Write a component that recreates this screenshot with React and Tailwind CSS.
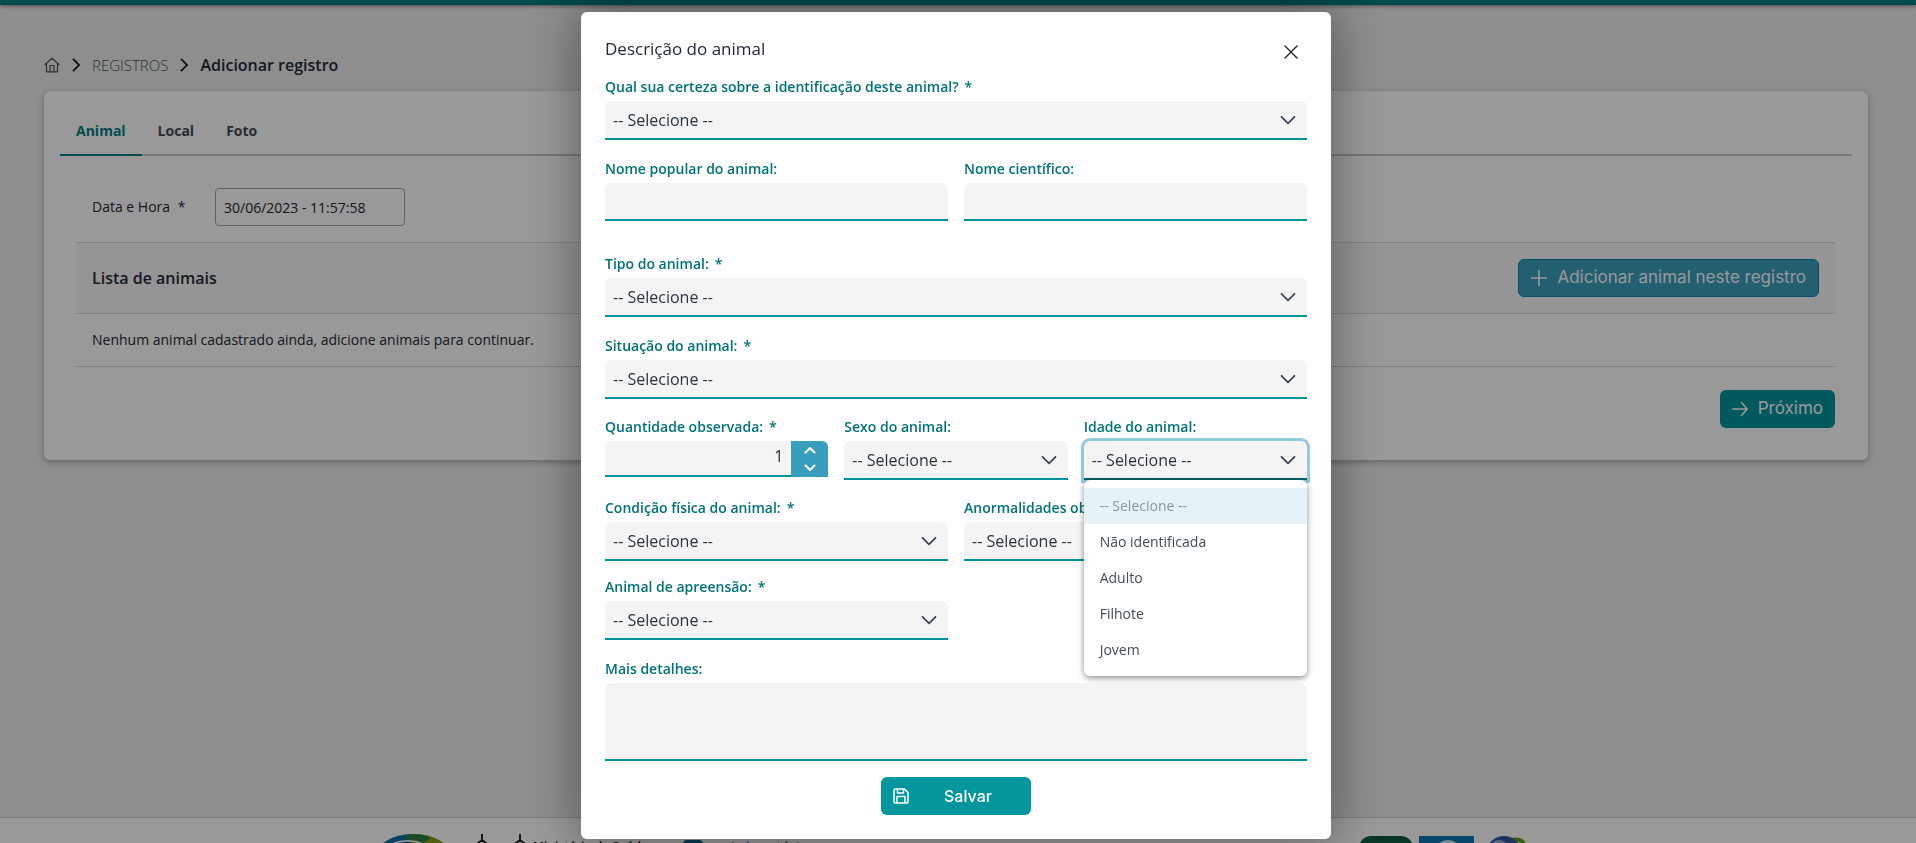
import React from "react";

const control =
  "w-full appearance-none rounded-t-md border-b-2 bg-[#f4f4f4] text-[#2a3540] outline-none";

function Chevron({ className = "" }) {
  return (
    <svg viewBox="0 0 16 16" className={className} fill="none" stroke="currentColor" strokeWidth="1.8" strokeLinecap="round" strokeLinejoin="round" aria-hidden="true">
      <path d="M1.500 4.800 8 11.300l6.500-6.500" />
    </svg>
  );
}

function Label({ htmlFor, required, children }) {
  return (
    <label htmlFor={htmlFor} className="block truncate text-sm font-semibold leading-6 text-[#00727a]">
      {children}
      {required && <span className="ml-1.5">*</span>}
    </label>
  );
}

function Select({ id, label, required, open, className = "" }) {
  return (
    <div className={`flex min-w-0 flex-col gap-0.5 ${className}`}>
      <Label htmlFor={id} required={required}>{label}</Label>
      <div className="relative">
        <select
          id={id}
          className={`${control} block h-[39px] px-2 text-base ${open ? "border-[#00646a] shadow-[0_0_0_3px_#94cadd]" : "border-[#00939b]"}`}
        >
          <option>-- Selecione --</option>
          {open && options.map((o) => <option key={o}>{o}</option>)}
        </select>
        <Chevron className="pointer-events-none absolute right-[11px] top-[11px] size-4 text-[#3b4754]" />
        {open && (
          <ul className="absolute left-0 top-full z-10 w-full rounded-md bg-white py-2 text-sm text-[#414c57] shadow-[0_2px_6px_rgba(0,0,0,0.45)]">
            <li className="bg-[#e6f2f8] px-4 leading-9 text-[#8b959b]">-- Selecione --</li>
            {options.map((o) => (
              <li key={o} className="px-4 leading-9">{o}</li>
            ))}
          </ul>
        )}
      </div>
    </div>
  );
}

const options = ["Não identificada", "Adulto", "Filhote", "Jovem"];

function TextField({ id, label }) {
  return (
    <div className="flex flex-col gap-0.5">
      <Label htmlFor={id}>{label}</Label>
      <input id={id} type="text" className={`${control} h-[38px] border-[#00939b] px-2`} />
    </div>
  );
}

function Breadcrumb() {
  return (
    <nav className="flex items-center gap-3 px-11 leading-6">
      <a href="#inicio" aria-label="Início" className="text-[#495057]">
        <svg viewBox="0 0 16 16" className="size-4" fill="none" stroke="currentColor" strokeWidth="1.2" aria-hidden="true">
          <path d="M.5 8 8 1.2 15.500 8M2.500 6.500v8.300h11V6.500M6 14.500V8.500h4v6" />
        </svg>
      </a>
      <Separator />
      <a href="#registros" className="text-[15px] font-light leading-6 text-[#495057]">REGISTROS</a>
      <Separator />
      <span className="text-base font-semibold leading-6 text-[#212b36]">Adicionar registro</span>
    </nav>
  );
}

function Separator() {
  return (
    <svg viewBox="0 0 8 14" className="h-3.5 w-2" fill="none" stroke="#111" strokeWidth="1.7" aria-hidden="true">
      <path d="M1 .8 7 7l-6 6.200" />
    </svg>
  );
}

function RecordCard() {
  return (
    <section className="mx-11 mr-12 mt-[14px] rounded-md bg-white px-4 pb-8 pt-5 shadow-[0_2px_6px_rgba(0,0,0,0.3)]">
      <div role="tablist" className="flex border-b-2 border-[#c3cacf] text-sm font-bold text-[#3f4b57]">
        <button role="tab" aria-selected="true" className="-mb-0.5 h-[45px] border-b-2 border-[#007f86] px-4 pb-1 text-[#007f86]">Animal</button>
        <button role="tab" className="h-[43px] px-4 pb-1">Local</button>
        <button role="tab" className="h-[43px] px-4 pb-1">Foto</button>
      </div>
      <div className="px-4 pr-[17px]">
        <div className="flex items-center px-4 pb-4 pt-8 text-sm text-[#1e2832]">
          <label htmlFor="data" className="w-[123px]">Data e Hora <span className="ml-1">*</span></label>
          <input id="data" type="text" defaultValue="30/06/2023 - 11:57:58" className="h-[38px] w-[190px] rounded border border-[#9aa4ac] bg-white px-2" />
        </div>
        <table className="w-full text-left">
          <thead>
            <tr className="border-y border-[#d6dadd] bg-[#f8f8f8]">
              <th className="px-4 py-4 text-base font-semibold text-[#212b36]">
                <div className="flex items-center justify-between">
                  Lista de animais
                  <button className="flex h-[38px] items-center gap-2.5 rounded-md border border-[#0087a8] bg-[#399ebd] px-3 font-[Inter] text-[17px] font-normal text-white">
                    <svg viewBox="0 0 16 16" className="size-4" fill="none" stroke="currentColor" strokeWidth="1.6" aria-hidden="true">
                      <path d="M8 0v16M0 8h16" />
                    </svg>
                    Adicionar animal neste registro
                  </button>
                </div>
              </th>
            </tr>
          </thead>
          <tbody>
            <tr className="border-b border-[#d6dadd]">
              <td className="h-[53px] px-4 text-sm text-[#1e2832]">Nenhum animal cadastrado ainda, adicione animais para continuar.</td>
            </tr>
          </tbody>
        </table>
        <div className="mt-[23px] flex justify-end">
          <button className="flex h-[38px] items-center gap-2.5 rounded-md bg-[#00969c] px-3 font-[Inter] text-[17px] text-white">
            <svg viewBox="0 0 16 16" className="size-4" fill="none" stroke="currentColor" strokeWidth="1.6" strokeLinecap="round" strokeLinejoin="round" aria-hidden="true">
              <path d="M.8 8h14.400M9.500 1.500 15.200 8l-5.700 6.500" />
            </svg>
            Próximo
          </button>
        </div>
      </div>
    </section>
  );
}

function Spire() {
  return (
    <svg viewBox="0 0 10 24" className="h-6 w-2.5" fill="none" stroke="#111" strokeWidth="1.800" aria-hidden="true">
      <path d="M5 0v6M1 13V9l4-3 4 3v4M1 13v11M9 13v11" />
    </svg>
  );
}

function Footer() {
  return (
    <footer className="h-[26px] overflow-hidden border-t border-[#ccc] bg-white">
      <div className="flex items-start pl-[375px] pt-4">
        <svg viewBox="0 0 76 40" className="h-10 w-[76px]" aria-hidden="true">
          <ellipse cx="38" cy="24" rx="38" ry="24" fill="#0a6ea3" />
          <path d="M38 0c20 0 34 8 38 20H50L34 8Z" fill="#8a9c1e" />
          <path d="M30 1c10-2 20 0 26 3l-8 5-16-2Z" fill="#2a7d46" />
          <path d="M10 14C24 4 42 5 54 13" fill="none" stroke="#fff" strokeWidth="1.500" />
        </svg>
        <div className="ml-[26px] flex gap-7">
          <Spire />
          <Spire />
        </div>
        <p className="ml-2 w-[150px] pt-[5px] text-xs font-semibold leading-4 text-[#111]">Ministério da Saúde</p>
        <div className="mt-1.5 h-6 w-5 rounded border-4 border-[#0b5f86]" />
        <p className="ml-7 pt-[3px] text-sm leading-5 text-[#0b5f86]">Laboratório</p>
        <div className="ml-auto mr-[386px] mt-0.5 flex items-start">
          <div className="h-10 w-[54px] rounded-xl bg-[#0d5a42]" />
          <svg viewBox="0 0 55 40" className="ml-1.5 h-10 w-[55px]" aria-hidden="true">
            <path d="M0 0h55v40H0Z" fill="#0f76b5" />
            <circle cx="29" cy="18" r="14" fill="#cfe5ef" />
            <circle cx="29" cy="20" r="12" fill="#0f76b5" />
          </svg>
          <svg viewBox="0 0 44 40" className="ml-3 h-10 w-11" aria-hidden="true">
            <path d="M22 5c10-4 18 0 17 9" fill="none" stroke="#5f9d16" strokeWidth="4" />
            <circle cx="18" cy="18" r="18" fill="#3156a0" />
            <ellipse cx="13" cy="8" rx="7" ry="4" fill="#8ba9d4" />
          </svg>
        </div>
      </div>
    </footer>
  );
}

function AnimalDialog() {
  return (
    <div className="fixed inset-0 z-20 flex items-start justify-center bg-black/40 pb-1 pr-1 pt-3">
      <div role="dialog" aria-modal="true" aria-labelledby="titulo" className="w-[750px] max-w-full rounded-md bg-white px-6 pb-6 pt-[25px] shadow-[0_0_50px_6px_rgba(0,0,0,0.35)]">
        <header className="flex h-[38px] items-start justify-between">
          <h2 id="titulo" className="text-[17px] font-medium leading-6 text-[#212b36]">Descrição do animal</h2>
          <button aria-label="Fechar" className="mr-2 flex h-[30px] items-center text-[#222]">
            <svg viewBox="0 0 16 16" className="size-4" fill="none" stroke="currentColor" strokeWidth="1.400" strokeLinecap="round" aria-hidden="true">
              <path d="m2 2 12 12M14 2 2 14" />
            </svg>
          </button>
        </header>
        <form className="flex flex-col">
          <Select id="certeza" label="Qual sua certeza sobre a identificação deste animal?" required />
          <div className="mt-[17px] grid grid-cols-2 gap-4">
            <TextField id="popular" label="Nome popular do animal:" />
            <TextField id="cientifico" label="Nome científico:" />
          </div>
          <Select id="tipo" label="Tipo do animal:" required className="mt-[31px]" />
          <Select id="situacao" label="Situação do animal:" required className="mt-[17px]" />
          <div className="mt-4 grid grid-cols-3 gap-4">
            <div className="flex min-w-0 flex-col gap-0.5">
              <Label htmlFor="quantidade" required>Quantidade observada:</Label>
              <div className="flex h-9">
                <input id="quantidade" type="text" inputMode="numeric" defaultValue="1" className="h-9 min-w-0 flex-1 rounded-tl-md border-b-2 border-[#00939b] bg-[#f4f4f4] px-2 pb-1 text-right text-base text-[#2a3540] outline-none" />
                <div className="flex w-[37px] flex-col rounded-tr-md bg-[#399ebd] text-white">
                  <button type="button" aria-label="Aumentar" className="flex flex-1 items-center justify-center">
                    <svg viewBox="0 0 12 8" className="h-2 w-3" fill="none" stroke="currentColor" strokeWidth="2" strokeLinecap="round" strokeLinejoin="round" aria-hidden="true">
                      <path d="m1.500 6.500 4.500-4.500 4.500 4.500" />
                    </svg>
                  </button>
                  <button type="button" aria-label="Diminuir" className="flex flex-1 items-center justify-center">
                    <svg viewBox="0 0 12 8" className="h-2 w-3" fill="none" stroke="currentColor" strokeWidth="2" strokeLinecap="round" strokeLinejoin="round" aria-hidden="true">
                      <path d="M1.500 1.500 6 6l4.500-4.500" />
                    </svg>
                  </button>
                </div>
              </div>
            </div>
            <Select id="sexo" label="Sexo do animal:" />
            <Select id="idade" label="Idade do animal:" open />
          </div>
          <div className="mt-4 grid grid-cols-2 gap-4">
            <Select id="condicao" label="Condição física do animal:" required />
            <Select id="anormalidades" label="Anormalidades observadas:" />
          </div>
          <div className="mt-[14px] grid grid-cols-2 gap-4">
            <Select id="apreensao" label="Animal de apreensão:" required />
          </div>
          <div className="mt-[17px] flex flex-col gap-0.5">
            <Label htmlFor="detalhes">Mais detalhes:</Label>
            <textarea id="detalhes" className={`${control} h-[78px] resize-none border-[#00939b] p-2`} />
          </div>
          <button type="button" className="mt-4 flex h-[38px] w-[150px] items-center self-center rounded-md bg-[#00969c] px-3 font-[Inter] text-base font-medium text-white">
            <svg viewBox="0 0 16 16" className="size-4" fill="none" stroke="currentColor" strokeWidth="1.500" strokeLinejoin="round" aria-hidden="true">
              <path d="M2 1h9.500L15 4.500V14a1 1 0 0 1-1 1H2a1 1 0 0 1-1-1V2a1 1 0 0 1 1-1ZM4 15V8.500h8V15M4.500 1v4h6V1" />
            </svg>
            <span className="ml-2 flex-1 text-center">Salvar</span>
          </button>
        </form>
      </div>
    </div>
  );
}

export default function App() {
  return (
    <div className="flex h-screen flex-col overflow-hidden bg-[#ededed] font-['Open_Sans',sans-serif]">
      <div className="h-[5px] shrink-0 bg-[#007d7d] shadow-[0_1px_4px_rgba(0,0,0,0.5)]" />
      <main className="flex-1 pt-12">
        <Breadcrumb />
        <RecordCard />
      </main>
      <Footer />
      <AnimalDialog />
    </div>
  );
}
